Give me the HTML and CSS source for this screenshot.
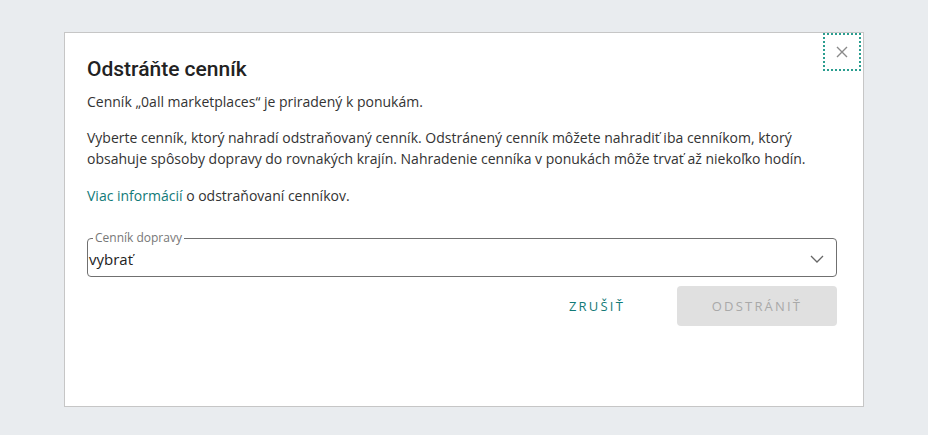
FILE: index.html
```html
<!DOCTYPE html>
<html lang="sk">
<head>
    <meta charset="UTF-8">
    <meta name="viewport" content="width=device-width, initial-scale=1.0">
    <title>Odstráňte cenník</title>
    <link rel="stylesheet" href="styles.css">
</head>
<body>
    <div class="dialog">
        <button class="close-btn" type="button" aria-label="Zavrieť">
            <svg width="12" height="12" viewBox="0 0 12 12">
                <path d="M1 1 L11 11 M11 1 L1 11" stroke="#8a8a8a" stroke-width="1.4" fill="none"/>
            </svg>
        </button>
        <h2 class="dialog-title">Odstráňte cenník</h2>
        <p class="lead">Cenník „0all marketplaces“ je priradený k ponukám.</p>
        <p class="info">Vyberte cenník, ktorý nahradí odstraňovaný cenník. Odstránený cenník môžete nahradiť iba cenníkom, ktorý obsahuje spôsoby dopravy do rovnakých krajín. Nahradenie cenníka v ponukách môže trvať až niekoľko hodín.</p>
        <p class="more"><a href="#">Viac informácií</a> o odstraňovaní cenníkov.</p>

        <fieldset class="select-field">
            <legend>Cenník dopravy</legend>
            <div class="select-value">
                <span>vybrať</span>
                <svg width="14" height="8" viewBox="0 0 14 8">
                    <path d="M1 1 L7 7 L13 1" stroke="#666" stroke-width="1.3" fill="none"/>
                </svg>
            </div>
        </fieldset>

        <div class="actions">
            <button class="btn btn-text" type="button">Zrušiť</button>
            <button class="btn btn-disabled" type="button" disabled>Odstrániť</button>
        </div>
    </div>
</body>
</html>
```

FILE: styles.css
```css
body {
    background: #e9ecef;
    color: #333;
    font-family: "Open Sans", Arial, sans-serif;
    margin: 0;
    padding: 32px 0 0 64px;
}
.dialog {
    position: relative;
    box-sizing: border-box;
    width: 800px;
    height: 375px;
    background: #fff;
    border: 1px solid #c6c6c6;
    padding: 22px 26px 0 22px;
}
.close-btn {
    position: absolute;
    top: 0;
    right: 2px;
    width: 38px;
    height: 38px;
    background: none;
    border: 2px dotted #2a9d8f;
    display: flex;
    align-items: center;
    justify-content: center;
    padding: 0;
    cursor: pointer;
}
.dialog-title {
    font-family: Roboto, "Open Sans", sans-serif;
    font-size: 21px;
    font-weight: 500;
    line-height: 28px;
    color: #222;
    margin: 0 0 8px;
}
p {
    font-size: 14px;
    line-height: 21px;
    margin: 0;
}
.info {
    margin-top: 15px;
}
.more {
    margin-top: 16px;
}
.more a {
    color: #117a78;
    text-decoration: none;
}
.select-field {
    margin: 25px 0 0;
    border: 1px solid #707070;
    border-radius: 4px;
    padding: 4px 12px 7px 1px;
}
.select-field legend {
    font-size: 12px;
    line-height: 14px;
    color: #777;
    padding: 0 2px;
    margin-left: 4px;
}
.select-value {
    display: flex;
    align-items: center;
    justify-content: space-between;
    font-size: 15px;
    line-height: 20px;
    color: #222;
}
.actions {
    display: flex;
    justify-content: flex-end;
    gap: 30px;
    margin-top: 9px;
}
.btn {
    font-family: "Open Sans", Arial, sans-serif;
    font-size: 13px;
    text-transform: uppercase;
    letter-spacing: 2.2px;
    height: 40px;
    border: none;
    border-radius: 4px;
    background: none;
    cursor: pointer;
}
.btn-text {
    color: #137a77;
    padding: 0 22px;
}
.btn-disabled {
    width: 160px;
    background: #e0e0e0;
    color: #a9a9a9;
    cursor: default;
}
```
